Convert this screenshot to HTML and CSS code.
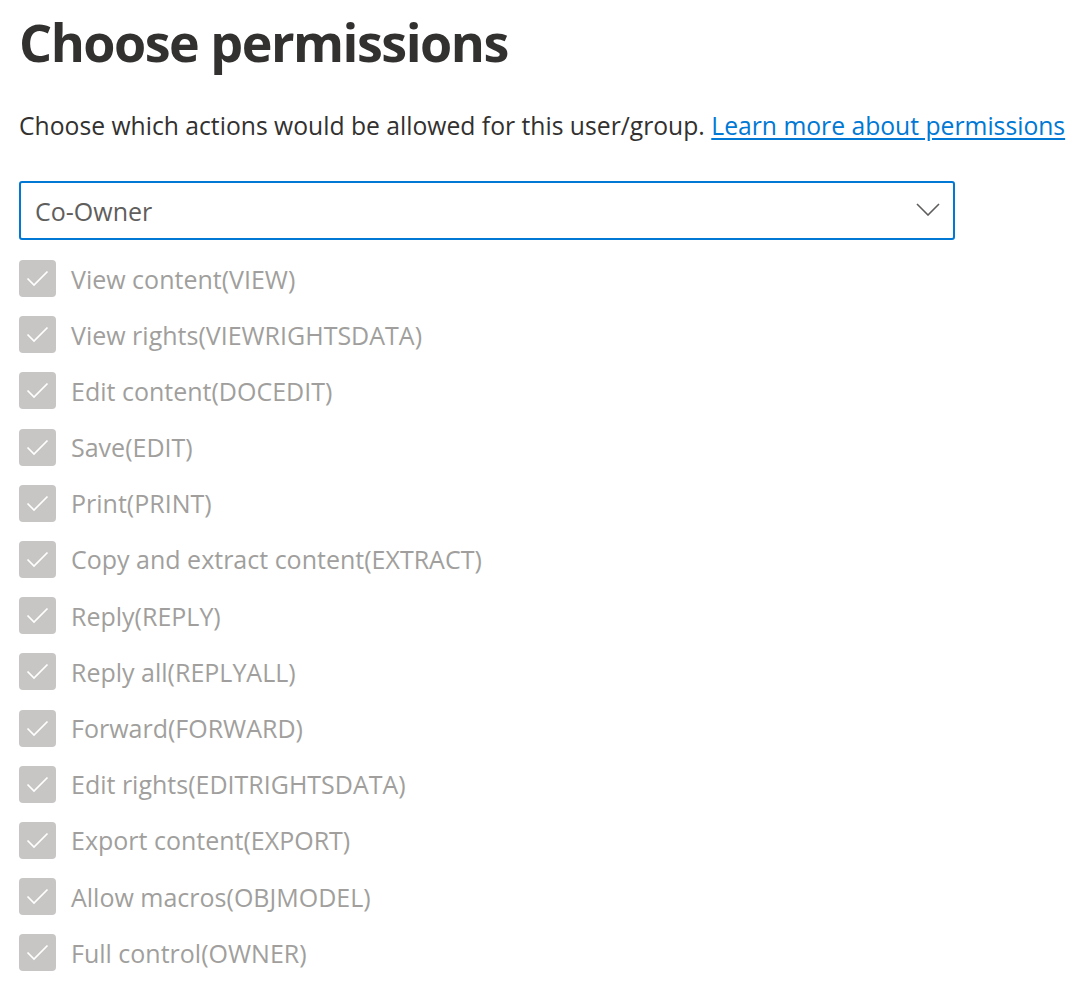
FILE: index.html
```html
<!DOCTYPE html>
<html>
<head>
<meta charset="utf-8">
<link rel="stylesheet" href="styles.css">
</head>
<body>
<div class="page">
  <h1 class="title">Choose permissions</h1>
  <p class="desc">Choose which actions would be allowed for this user/group. <a class="link" href="#">Learn more about permissions</a></p>
  <div class="dropdown">
    <span class="dd-text">Co-Owner</span>
    <svg class="chev" width="24" height="13" viewBox="0 0 24 13"><path d="M1 1 L12 12 L23 1" fill="none" stroke="#605e5c" stroke-width="1.6"/></svg>
  </div>
  <ul class="list">
    <li class="row"><span class="box"><svg viewBox="0 0 37 37"><path d="M8.5 18.5 L15 25 L28.5 11.5" fill="none" stroke="#fff" stroke-width="1.7"/></svg></span><span class="label">View content(VIEW)</span></li>
    <li class="row"><span class="box"><svg viewBox="0 0 37 37"><path d="M8.5 18.5 L15 25 L28.5 11.5" fill="none" stroke="#fff" stroke-width="1.7"/></svg></span><span class="label">View rights(VIEWRIGHTSDATA)</span></li>
    <li class="row"><span class="box"><svg viewBox="0 0 37 37"><path d="M8.5 18.5 L15 25 L28.5 11.5" fill="none" stroke="#fff" stroke-width="1.7"/></svg></span><span class="label">Edit content(DOCEDIT)</span></li>
    <li class="row"><span class="box"><svg viewBox="0 0 37 37"><path d="M8.5 18.5 L15 25 L28.5 11.5" fill="none" stroke="#fff" stroke-width="1.7"/></svg></span><span class="label">Save(EDIT)</span></li>
    <li class="row"><span class="box"><svg viewBox="0 0 37 37"><path d="M8.5 18.5 L15 25 L28.5 11.5" fill="none" stroke="#fff" stroke-width="1.7"/></svg></span><span class="label">Print(PRINT)</span></li>
    <li class="row"><span class="box"><svg viewBox="0 0 37 37"><path d="M8.5 18.5 L15 25 L28.5 11.5" fill="none" stroke="#fff" stroke-width="1.7"/></svg></span><span class="label">Copy and extract content(EXTRACT)</span></li>
    <li class="row"><span class="box"><svg viewBox="0 0 37 37"><path d="M8.5 18.5 L15 25 L28.5 11.5" fill="none" stroke="#fff" stroke-width="1.7"/></svg></span><span class="label">Reply(REPLY)</span></li>
    <li class="row"><span class="box"><svg viewBox="0 0 37 37"><path d="M8.5 18.5 L15 25 L28.5 11.5" fill="none" stroke="#fff" stroke-width="1.7"/></svg></span><span class="label">Reply all(REPLYALL)</span></li>
    <li class="row"><span class="box"><svg viewBox="0 0 37 37"><path d="M8.5 18.5 L15 25 L28.5 11.5" fill="none" stroke="#fff" stroke-width="1.7"/></svg></span><span class="label">Forward(FORWARD)</span></li>
    <li class="row"><span class="box"><svg viewBox="0 0 37 37"><path d="M8.5 18.5 L15 25 L28.5 11.5" fill="none" stroke="#fff" stroke-width="1.7"/></svg></span><span class="label">Edit rights(EDITRIGHTSDATA)</span></li>
    <li class="row"><span class="box"><svg viewBox="0 0 37 37"><path d="M8.5 18.5 L15 25 L28.5 11.5" fill="none" stroke="#fff" stroke-width="1.7"/></svg></span><span class="label">Export content(EXPORT)</span></li>
    <li class="row"><span class="box"><svg viewBox="0 0 37 37"><path d="M8.5 18.5 L15 25 L28.5 11.5" fill="none" stroke="#fff" stroke-width="1.7"/></svg></span><span class="label">Allow macros(OBJMODEL)</span></li>
    <li class="row"><span class="box"><svg viewBox="0 0 37 37"><path d="M8.5 18.5 L15 25 L28.5 11.5" fill="none" stroke="#fff" stroke-width="1.7"/></svg></span><span class="label">Full control(OWNER)</span></li>
  </ul>
</div>
</body>
</html>
```

FILE: styles.css
```css
html, body {
  margin: 0;
  padding: 0;
  background: #ffffff;
}
body {
  font-family: "Open Sans", "Noto Sans", "Liberation Sans", sans-serif;
  color: #323130;
}
.page {
  padding: 9px 0 0 19px;
}
.title {
  margin: 0;
  font-size: 52px;
  font-weight: 700;
  line-height: 66px;
  color: #323130;
  letter-spacing: -1.5px;
}
.desc {
  margin: 35px 0 0 0;
  font-size: 24.7px;
  line-height: 32px;
  color: #323130;
  white-space: nowrap;
}
.link {
  color: #0078d4;
  text-decoration: underline;
  text-underline-offset: 3px;
}
.dropdown {
  margin-top: 39px;
  height: 55px;
  border: 2px solid #0078d4;
  border-radius: 3px;
  display: flex;
  align-items: center;
  justify-content: space-between;
  padding: 0 13px 0 14px;
  box-sizing: content-box;
  width: 905px;
}
.dd-text {
  font-size: 25px;
  color: #605e5c;
}
.chev {
  display: block;
  margin-top: -2px;
}
.list {
  list-style: none;
  margin: 20px 0 0 0;
  padding: 0;
  display: flex;
  flex-direction: column;
  gap: 19.2px;
}
.row {
  display: flex;
  align-items: center;
  gap: 15px;
  height: 37px;
}
.box {
  width: 37px;
  height: 37px;
  border-radius: 4px;
  background: #c8c6c4;
  flex: none;
  display: block;
}
.box svg {
  display: block;
  width: 37px;
  height: 37px;
}
.label {
  font-size: 25px;
  color: #a19f9d;
  line-height: 34px;
}
```
